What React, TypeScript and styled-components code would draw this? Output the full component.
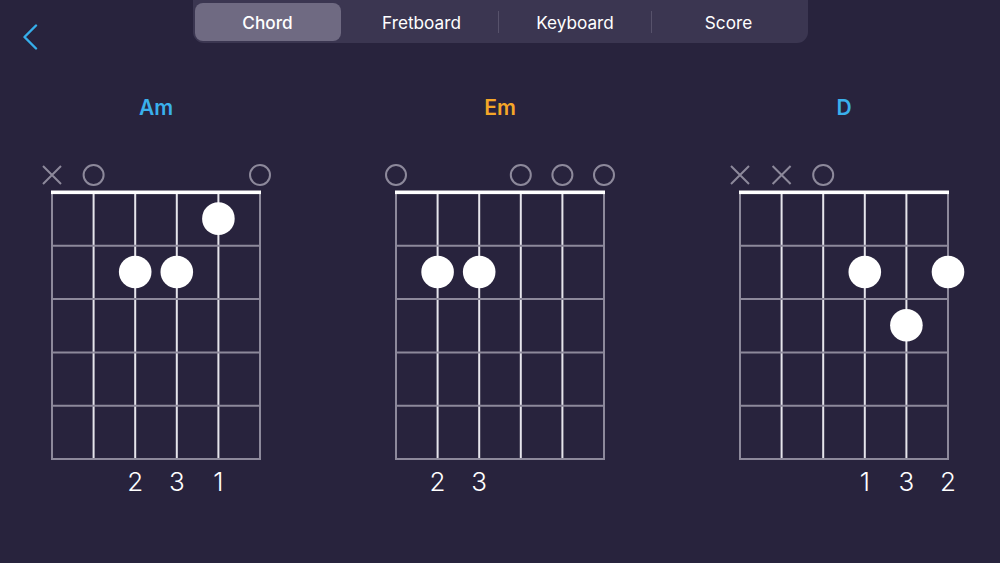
import React from "react";
import styled, { createGlobalStyle } from "styled-components";

const Global = createGlobalStyle`
  html, body { margin: 0; padding: 0; background: #28233d; }
  body { font-family: Inter, "Noto Sans", "Liberation Sans", sans-serif; }
  #root { width: 1000px; height: 563px; overflow: hidden; }
`;

const Page = styled.div`
  width: 1000px;
  height: 563px;
  background: #28233d;
  display: flex;
  flex-direction: column;
`;

const Header = styled.header`
  display: grid;
  grid-template-columns: 1fr auto 1fr;
  align-items: start;
  height: 43px;
`;

const BackButton = styled.button`
  background: none;
  border: none;
  padding: 24px 0 0 22px;
  margin: 0;
  justify-self: start;
  cursor: pointer;
  display: flex;
`;

const Segmented = styled.nav`
  width: 611px;
  height: 38px;
  margin-top: -2px;
  padding: 5px 2px 2px;
  background: #3b3651;
  border-radius: 0 0 11px 11px;
  display: grid;
  grid-template-columns: 150px 154px 153px 1fr;
  box-sizing: content-box;
  position: relative;
`;

const Segment = styled.div<{ $active?: boolean; $divider?: boolean }>`
  position: relative;
  display: flex;
  align-items: center;
  justify-content: center;
  margin-right: ${(p) => (p.$active ? "4px" : "0")};
  font-size: 17.2px;
  font-weight: ${(p) => (p.$active ? 500 : 400)};
  color: #ffffff;
  border-radius: 8px;
  background: ${(p) => (p.$active ? "#6f6a82" : "transparent")};
  &::before {
    content: "";
    display: ${(p) => (p.$divider ? "block" : "none")};
    position: absolute;
    left: -1px;
    top: 8px;
    bottom: 8px;
    width: 1px;
    background: #57526b;
  }
`;

const Chords = styled.main`
  display: flex;
  justify-content: center;
  gap: 104px;
  padding-top: 51px;
`;

const ChordColumn = styled.section`
  width: 240px;
  display: flex;
  flex-direction: column;
  align-items: center;
`;

const ChordName = styled.h2<{ $color: string }>`
  margin: 0 0 38px;
  height: 28px;
  line-height: 28px;
  font-size: 21px;
  font-weight: 600;
  color: ${(p) => p.$color};
`;

const Diagram = styled.svg`
  display: block;
  overflow: visible;
`;

type Chord = {
  name: string;
  color: string;
  open: (string | null)[];
  dots: { s: number; f: number }[];
  fingers: (number | null)[];
};

const chords: Chord[] = [
  {
    name: "Am",
    color: "#3ab0ec",
    open: ["x", "o", null, null, null, "o"],
    dots: [
      { s: 4, f: 1 },
      { s: 2, f: 2 },
      { s: 3, f: 2 },
    ],
    fingers: [null, null, 2, 3, 1, null],
  },
  {
    name: "Em",
    color: "#f4a628",
    open: ["o", null, null, "o", "o", "o"],
    dots: [
      { s: 1, f: 2 },
      { s: 2, f: 2 },
    ],
    fingers: [null, 2, 3, null, null, null],
  },
  {
    name: "D",
    color: "#3ab0ec",
    open: ["x", "x", "o", null, null, null],
    dots: [
      { s: 3, f: 2 },
      { s: 5, f: 2 },
      { s: 4, f: 3 },
    ],
    fingers: [null, null, null, 1, 3, 2],
  },
];

const LEFT = 16;
const SP = 41.6;
const NUT = 32.5;
const FRET = 53.3;
const GRAY = "#8d899b";
const LIGHT = "#e6e5ec";

const sx = (i: number) => LEFT + i * SP;
const fy = (k: number) => NUT + k * FRET;

function ChordDiagram({ chord }: { chord: Chord }) {
  const right = sx(5);
  return (
    <Diagram width={240} height={340} viewBox="0 0 240 340">
      {[0, 1, 2, 3, 4, 5].map((i) => (
        <line
          key={"s" + i}
          x1={sx(i)}
          x2={sx(i)}
          y1={NUT}
          y2={fy(5)}
          stroke={i === 0 || i === 5 ? GRAY : LIGHT}
          strokeWidth={2}
        />
      ))}
      {[1, 2, 3, 4, 5].map((k) => (
        <line
          key={"f" + k}
          x1={LEFT - 1}
          x2={right + 1}
          y1={fy(k)}
          y2={fy(k)}
          stroke={GRAY}
          strokeWidth={2}
        />
      ))}
      <rect x={LEFT - 1} y={NUT - 2} width={right - LEFT + 2} height={3.6} fill="#ffffff" />
      {chord.open.map((m, i) =>
        m === "o" ? (
          <circle key={"m" + i} cx={sx(i)} cy={15} r={10} fill="none" stroke={GRAY} strokeWidth={2} />
        ) : m === "x" ? (
          <path
            key={"m" + i}
            d={`M${sx(i) - 9} 6 L${sx(i) + 9} 24 M${sx(i) + 9} 6 L${sx(i) - 9} 24`}
            stroke={GRAY}
            strokeWidth={2}
          />
        ) : null
      )}
      {chord.dots.map((d, i) => (
        <circle key={"d" + i} cx={sx(d.s)} cy={(fy(d.f - 1) + fy(d.f)) / 2 - 0.5} r={16.3} fill="#ffffff" />
      ))}
      {chord.fingers.map((f, i) =>
        f ? (
          <text
            key={"t" + i}
            x={sx(i)}
            y={331}
            textAnchor="middle"
            fill="#ffffff"
            fontSize={26}
            fontWeight={300}
            fontFamily='Inter, "Noto Sans", sans-serif'
          >
            {f}
          </text>
        ) : null
      )}
    </Diagram>
  );
}

export default function App() {
  const tabs = ["Chord", "Fretboard", "Keyboard", "Score"];
  return (
    <Page>
      <Global />
      <Header>
        <BackButton aria-label="Back">
          <svg width="16" height="26" viewBox="0 0 16 26">
            <path d="M14 1.5 L2.5 13 L14 24.5" fill="none" stroke="#36aeea" strokeWidth={2.4} strokeLinecap="round" strokeLinejoin="round" />
          </svg>
        </BackButton>
        <Segmented>
          {tabs.map((t, i) => (
            <Segment key={t} $active={i === 0} $divider={i >= 2}>
              {t}
            </Segment>
          ))}
        </Segmented>
        <div />
      </Header>
      <Chords>
        {chords.map((c) => (
          <ChordColumn key={c.name}>
            <ChordName $color={c.color}>{c.name}</ChordName>
            <ChordDiagram chord={c} />
          </ChordColumn>
        ))}
      </Chords>
    </Page>
  );
}
